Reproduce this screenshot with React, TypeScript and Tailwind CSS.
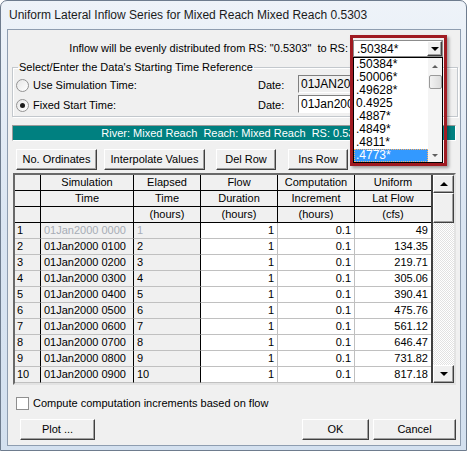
import React from 'react';

const rows = [
  { n: '1', time: '01Jan2000 0000', el: '1', lat: '49' },
  { n: '2', time: '01Jan2000 0100', el: '2', lat: '134.35' },
  { n: '3', time: '01Jan2000 0200', el: '3', lat: '219.71' },
  { n: '4', time: '01Jan2000 0300', el: '4', lat: '305.06' },
  { n: '5', time: '01Jan2000 0400', el: '5', lat: '390.41' },
  { n: '6', time: '01Jan2000 0500', el: '6', lat: '475.76' },
  { n: '7', time: '01Jan2000 0600', el: '7', lat: '561.12' },
  { n: '8', time: '01Jan2000 0700', el: '8', lat: '646.47' },
  { n: '9', time: '01Jan2000 0800', el: '9', lat: '731.82' },
  { n: '10', time: '01Jan2000 0900', el: '10', lat: '817.18' },
];

const rsList = ['.50384*', '.50006*', '.49628*', '0.4925', '.4887*', '.4849*', '.4811*', '.4773*'];

const headers = [
  ['', '', ''],
  ['Simulation', 'Time', ''],
  ['Elapsed', 'Time', '(hours)'],
  ['Flow', 'Duration', '(hours)'],
  ['Computation', 'Increment', '(hours)'],
  ['Uniform', 'Lat Flow', '(cfs)'],
];

const raised =
  'bg-[#f0f0f0] border border-t-white border-l-white border-r-[#404040] border-b-[#404040] shadow-[inset_-1px_-1px_0_#a0a0a0]';

function Btn({ label, className }: { label: string; className: string }) {
  return (
    <div className={`${raised} ${className} h-[21px] flex items-center justify-center text-[11px] text-black`}>
      {label}
    </div>
  );
}

function UpArrow() {
  return <div className="w-0 h-0 border-x-[4px] border-x-transparent border-b-[4px] border-b-black" />;
}

function DownArrow() {
  return <div className="w-0 h-0 border-x-[4px] border-x-transparent border-t-[4px] border-t-black" />;
}

export default function App() {
  return (
    <div className="w-[467px] h-[451px] bg-white font-['Liberation_Sans',Arial,sans-serif]">
      <div className="w-full h-full flex flex-col rounded-t-[7px] border border-[#6e7c8e] bg-gradient-to-b from-[#eef3f9] via-[#dae5f2] to-[#d3e0ef] pl-[6px] pr-[5px] pb-[4px]">
        {/* Title */}
        <div className="h-[28px] flex items-center pl-[2px] text-[12px] text-[#1b1b1b]">
          Uniform Lateral Inflow Series for Mixed Reach Mixed Reach 0.5303
        </div>

        {/* Client */}
        <div className="flex-1 flex flex-col bg-[#f0f0f0] border border-[#8e9db0] text-[11px] text-black">
          {/* RS row */}
          <div className="mt-[10px] h-[17px] flex items-center justify-end pr-[17px]">
            <span className="whitespace-pre mr-[5px]">Inflow will be evenly distributed from RS: "0.5303"  to RS:</span>
            <div className="relative w-[90px] h-[17px] z-10">
              <div className="w-full h-full flex items-center bg-white border border-[#8c8c8c]">
                <span className="flex-1 pl-[3px] text-[12px] leading-none">.50384*</span>
                <div className={`${raised} w-[15px] h-full flex items-center justify-center`}>
                  <DownArrow />
                </div>
              </div>
              {/* dropdown list */}
              <div className="absolute left-0 top-full w-[90px] h-[106px] bg-white border border-black flex">
                <div className="flex-1 flex flex-col">
                  {rsList.map((v, i) => (
                    <div
                      key={v}
                      className={`h-[13px] leading-[13px] pl-[2px] text-[12px] ${
                        i === rsList.length - 1 ? 'bg-[#3399ff] text-white outline-1 outline-dotted outline-[#ffb060] -outline-offset-1' : ''
                      }`}
                    >
                      {v}
                    </div>
                  ))}
                </div>
                <div className="w-[14px] flex flex-col items-center bg-[#f4f4f4]">
                  <div className="h-[17px] flex items-center justify-center">
                    <div className="w-0 h-0 border-x-[3px] border-x-transparent border-b-[3px] border-b-[#606060]" />
                  </div>
                  <div className="w-[13px] h-[14px] rounded-[2px] border border-[#9a9a9a] bg-gradient-to-r from-[#f2f2f2] to-[#dcdcdc]" />
                  <div className="flex-1" />
                  <div className="h-[14px] flex items-center justify-center">
                    <div className="w-0 h-0 border-x-[3px] border-x-transparent border-t-[3px] border-t-[#606060]" />
                  </div>
                </div>
              </div>
              {/* highlight frame */}
              <div className="absolute -left-[3px] -top-[5px] w-[97px] h-[131px] border-[3px] border-[#a01b22] shadow-[2px_2px_3px_rgba(0,0,0,0.35)] pointer-events-none" />
            </div>
          </div>

          {/* Group box */}
          <fieldset className="mt-[3px] ml-[4px] mr-[2px] border border-[#c3c8cd] shadow-[inset_1px_1px_0_#fff,1px_1px_0_#fff] pt-[1px] pb-[1px]">
            <legend className="ml-[5px] px-[1px] leading-[14px]">Select/Enter the Data's Starting Time Reference</legend>
            <div className="h-[20px] flex items-center">
              <div className="ml-[3px] w-[242px] flex items-center">
                <div className="w-[13px] h-[13px] rounded-full border border-[#939393] bg-gradient-to-br from-[#e6e6e6] to-white" />
                <span className="ml-[4px]">Use Simulation Time:</span>
              </div>
              <span className="w-[40px]">Date:</span>
              <div className="w-[120px] h-[18px] -mt-[3px] bg-[#f0f0f0] border border-t-[#808080] border-l-[#808080] border-r-white border-b-white flex items-center pl-[2px] text-[12px]">
                01JAN2000
              </div>
            </div>
            <div className="h-[20px] flex items-center">
              <div className="ml-[3px] w-[242px] flex items-center">
                <div className="w-[13px] h-[13px] rounded-full border border-[#939393] bg-gradient-to-br from-[#e6e6e6] to-white flex items-center justify-center">
                  <div className="w-[5px] h-[5px] rounded-full bg-[#1a1a1a]" />
                </div>
                <span className="ml-[4px]">Fixed Start Time:</span>
              </div>
              <span className="w-[40px]">Date:</span>
              <div className="w-[120px] h-[18px] -mt-[3px] bg-white border border-t-[#808080] border-l-[#808080] border-r-white border-b-white flex items-center pl-[2px] text-[12px]">
                01Jan2000
              </div>
            </div>
          </fieldset>

          {/* River bar */}
          <div className="mt-[8px] ml-[4px] mr-[4px] h-[16px] bg-[#008080] border border-t-[#9a9a9a] border-l-[#9a9a9a] border-r-white border-b-white flex items-center justify-center text-white whitespace-pre">
            River: Mixed Reach  Reach: Mixed Reach  RS: 0.5303
          </div>

          {/* Buttons */}
          <div className="mt-[8px] ml-[8px] flex">
            <Btn label="No. Ordinates" className="w-[81px]" />
            <Btn label="Interpolate Values" className="ml-[7px] w-[101px]" />
            <Btn label="Del Row" className="ml-[11px] w-[60px]" />
            <Btn label="Ins Row" className="ml-[12px] w-[60px]" />
          </div>

          {/* Table */}
          <div className="mt-[3px] ml-[5px] mr-[4px] h-[212px] flex border-2 border-t-[#696969] border-l-[#696969] border-r-[#e3e3e3] border-b-[#e3e3e3] overflow-hidden">
            <div className="w-[416px] grid grid-cols-[26px_93px_67px_77px_77px_76px] auto-rows-[16px] content-start">
              {[0, 1, 2].map((r) =>
                headers.map((h, c) => (
                  <div
                    key={`h${r}-${c}`}
                    className={`bg-[#f0f0f0] border-b border-black ${c < 5 ? 'border-r' : ''} flex items-center justify-center leading-none`}
                  >
                    {h[r]}
                  </div>
                ))
              )}
              {rows.map((row, i) => (
                <React.Fragment key={row.n}>
                  <div className="bg-[#f0f0f0] border-r border-r-black border-b border-b-[#c0c0c0] pl-[2px] flex items-center">
                    {row.n}
                  </div>
                  <div className={`bg-[#f0f0f0] border-r border-r-black border-b border-b-[#c0c0c0] pl-[3px] flex items-center ${i === 0 ? 'text-[#a7adb6]' : ''}`}>
                    {row.time}
                  </div>
                  <div className={`bg-[#f0f0f0] border-r border-r-black border-b border-b-[#c0c0c0] pl-[3px] flex items-center ${i === 0 ? 'text-[#a7adb6]' : ''}`}>
                    {row.el}
                  </div>
                  <div className="bg-white border-r border-b border-[#c0c0c0] pr-[3px] flex items-center justify-end">1</div>
                  <div className="bg-white border-r border-b border-[#c0c0c0] pr-[3px] flex items-center justify-end">0.1</div>
                  <div className="bg-white border-b border-[#c0c0c0] pr-[3px] flex items-center justify-end">{row.lat}</div>
                </React.Fragment>
              ))}
            </div>
            <div className="w-[2px] bg-[#404040]" />
            <div className="flex-1 flex flex-col">
              <div className={`${raised} h-[18px] flex items-center justify-center`}>
                <UpArrow />
              </div>
              <div className={`${raised} h-[30px]`} />
              <div className="flex-1 bg-[repeating-conic-gradient(#ffffff_0_25%,#e2e2e2_0_50%)] bg-size-[2px_2px]" />
              <div className={`${raised} h-[18px] flex items-center justify-center`}>
                <DownArrow />
              </div>
            </div>
          </div>

          {/* Checkbox */}
          <div className="mt-[12px] ml-[8px] h-[13px] flex items-center">
            <div className="w-[13px] h-[13px] border border-[#8f8f8f] bg-white" />
            <span className="ml-[4px] text-[11px]">Compute computation increments based on flow</span>
          </div>

          {/* Bottom buttons */}
          <div className="mt-[9px] flex">
            <Btn label="Plot ..." className="ml-[12px] w-[75px]" />
            <div className="flex-1" />
            <Btn label="OK" className="w-[67px]" />
            <Btn label="Cancel" className="ml-[4px] mr-[4px] w-[83px]" />
          </div>
        </div>
      </div>
    </div>
  );
}
